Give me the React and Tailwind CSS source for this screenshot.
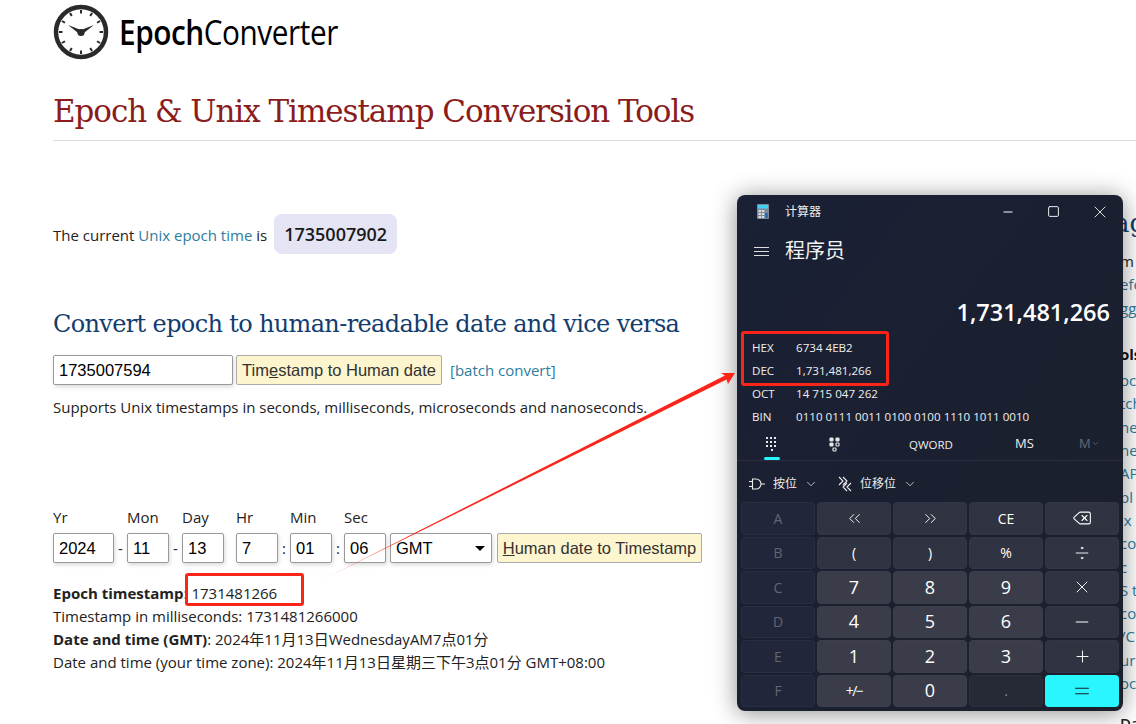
import { ChevronDown, ChevronsLeft, ChevronsRight, Delete, Divide, Equal, Minus, Plus, Square, X } from "lucide-react";

const FIELD = "h-[30px] border border-[#999] rounded-[2px] bg-white pl-[5px] text-[16.5px] text-black flex items-center shadow-[1px_2px_4px_rgba(0,0,0,0.15)] font-['Liberation_Sans',sans-serif]";
const YELLOW = "h-[30px] border border-[#aaa] rounded-[2px] bg-[#fdf5ce] text-[16.5px] text-[#333] flex items-center justify-center font-['Liberation_Sans',sans-serif]";
const CJK = "font-['Open_Sans','Noto_Sans_CJK_SC',sans-serif]";

const dateFields = [
  { label: "Yr", value: "2024", w: "w-[61px]", sep: "-", sepW: "w-[13px]" },
  { label: "Mon", value: "11", w: "w-[42px]", sep: "-", sepW: "w-[13px]" },
  { label: "Day", value: "13", w: "w-[42px]", sep: "", sepW: "w-[12px]" },
  { label: "Hr", value: "7", w: "w-[42px]", sep: ":", sepW: "w-[12px]" },
  { label: "Min", value: "01", w: "w-[42px]", sep: ":", sepW: "w-[12px]" },
  { label: "Sec", value: "06", w: "w-[42px]", sep: "", sepW: "w-[12px]" },
];

const LINK = "text-[#2d7d9d]";
const sideLines = [
  { text: "m", cls: "text-[#222] mt-[12px]" },
  { text: "efe", cls: LINK },
  { text: "gg", cls: LINK },
  { text: "ols", cls: "text-[#111] font-bold mt-[23px]" },
  { text: "oc", cls: `${LINK} mt-[3px]` },
  { text: "tch", cls: LINK },
  { text: "ne", cls: LINK },
  { text: "ne", cls: LINK },
  { text: "AP", cls: LINK },
  { text: "bl", cls: LINK },
  { text: "ix", cls: LINK },
  { text: "co", cls: LINK },
  { text: "c", cls: LINK },
  { text: "S t", cls: LINK },
  { text: "co", cls: LINK },
  { text: "/C", cls: LINK },
  { text: "ur", cls: LINK },
  { text: "oc", cls: LINK },
];

const radixRows = [
  { label: "HEX", value: "6734 4EB2" },
  { label: "DEC", value: "1,731,481,266" },
  { label: "OCT", value: "14 715 047 262" },
  { label: "BIN", value: "0110 0111 0011 0100 0100 1110 1011 0010" },
];

const OFF = "bg-[#22263a] border border-[#2a2e42] text-[#62656f] text-[14px]";
const FN = "bg-[#303341] border border-[#33364a] text-white text-[14px]";
const NUM = "bg-[#3a3c4a] border border-[#3d3f4d] text-white text-[18px]";

const keys = [
  ["A", OFF], [<ChevronsLeft key="l" size={19} strokeWidth={1.2} />, FN], [<ChevronsRight key="r" size={19} strokeWidth={1.2} />, FN], ["CE", FN], [<Delete key="d" size={20} strokeWidth={1.3} />, FN],
  ["B", OFF], ["(", FN], [")", FN], ["%", FN], [<Divide key="v" size={20} strokeWidth={1.1} />, FN],
  ["C", OFF], ["7", NUM], ["8", NUM], ["9", NUM], [<X key="x" size={20} strokeWidth={1.1} />, FN],
  ["D", OFF], ["4", NUM], ["5", NUM], ["6", NUM], [<Minus key="m" size={20} strokeWidth={1.2} />, FN],
  ["E", OFF], ["1", NUM], ["2", NUM], ["3", NUM], [<Plus key="p" size={19} strokeWidth={1.2} />, FN],
  ["F", OFF], [<span key="s" className="text-[14px] tracking-[-1.5px]">+/−</span>, NUM], ["0", NUM], [".", "bg-[#262936] border border-[#2c2f3c] text-[#8a8c96] text-[14px]"], [<Equal key="e" size={22} strokeWidth={1.2} />, "bg-[#29f6ff] text-[#16202c]"],
];

function ClockLogo() {
  const ticks = Array.from({ length: 12 }, (_, i) => i * 30);
  return (
    <svg width="56" height="56" viewBox="0 0 56 56" className="shrink-0">
      <circle cx="28" cy="28" r="25" fill="none" stroke="#2a2a2a" strokeWidth="4.5" />
      {ticks.map((a) => (
        <line key={a} x1="28" y1="6" x2="28" y2="9.5" stroke="#2a2a2a" strokeWidth="2" transform={`rotate(${a} 28 28)`} />
      ))}
      <path d="M15 21 L28 26 L41 21 L29.5 30 L26.5 30 Z" fill="#2a2a2a" />
      <circle cx="28" cy="28.5" r="3.6" fill="#2a2a2a" />
    </svg>
  );
}

function CalcIcon() {
  return (
    <svg width="12" height="15" viewBox="0 0 12 15">
      <rect width="12" height="15" rx="1" fill="#7d8a96" />
      <rect x="1" y="1" width="10" height="3.5" fill="#3fd0f5" />
      <g fill="#d5dbe0">
        <rect x="1.5" y="6" width="2.5" height="2" /><rect x="4.8" y="6" width="2.5" height="2" />
        <rect x="1.5" y="9" width="2.5" height="2" /><rect x="4.8" y="9" width="2.5" height="2" />
        <rect x="1.5" y="12" width="2.5" height="2" /><rect x="4.8" y="12" width="2.5" height="2" />
      </g>
      <rect x="8.2" y="9" width="2.5" height="5" fill="#2367b0" />
    </svg>
  );
}

function Calculator() {
  return (
    <div className={`absolute left-[737px] top-[195px] w-[386px] h-[516px] rounded-[8px] bg-gradient-to-br from-[#1a2035] to-[#1c202c] shadow-[0_2px_24px_rgba(0,0,0,0.45)] text-white flex flex-col font-['Open_Sans','Noto_Sans_CJK_SC',sans-serif] overflow-hidden`}>
      <div className="h-[33px] shrink-0 flex items-center pl-[20px]">
        <CalcIcon />
        <span className="ml-[16px] text-[12px] text-[#eee]">计算器</span>
        <div className="ml-auto flex items-center pr-[13px]">
          <Minus size={14} strokeWidth={1.7} />
          <Square size={13} strokeWidth={1.7} className="ml-[32px]" />
          <X size={20} strokeWidth={1} className="ml-[30px]" />
        </div>
      </div>
      <div className="h-[46px] shrink-0 flex items-center pl-[17px]">
        <div className="w-[15px] flex flex-col gap-[3px]">
          <div className="h-px bg-[#ddd]" />
          <div className="h-px bg-[#ddd]" />
          <div className="h-px bg-[#ddd]" />
        </div>
        <span className="ml-[16px] text-[20px] text-[#f2f2f2]">程序员</span>
      </div>
      <div className="h-[62px] shrink-0 flex items-start pt-[23px] leading-[30px] justify-end pr-[13px] text-[23.5px] font-semibold">1,731,481,266</div>
      <div className="shrink-0 flex flex-col pl-[15px] relative text-[11.6px] text-[#eee]">
        <div className="absolute left-[6px] top-[29px] w-px h-[14px] bg-[#888]" />
        {radixRows.map((r) => (
          <div key={r.label} className="h-[23px] flex items-center">
            <span className="w-[44px]">{r.label}</span>
            <span>{r.value}</span>
          </div>
        ))}
      </div>
      <div className="h-[33px] shrink-0 flex items-center relative text-[11.5px] border-b border-[#2a2e40]">
        <div className="w-[70px] flex justify-center relative">
          <svg width="12" height="16" viewBox="0 0 12 16" fill="#e8e8e8">
            {[0, 4, 8].flatMap((x) => [1, 5, 9].map((y) => <rect key={`${x}-${y}`} x={x} y={y} width="2" height="2" />))}
            <rect x="5" y="13" width="2" height="2" />
          </svg>
          <div className="absolute left-[27px] top-[21px] w-[16px] h-[3px] rounded-full bg-[#29f6ff]" />
        </div>
        <div className="w-[56px] flex justify-center">
          <svg width="12" height="15" viewBox="0 0 12 15" fill="none" stroke="#e8e8e8" strokeWidth="1.2">
            <rect x="1" y="1" width="3" height="3" rx="0.8" fill="#e8e8e8" /><rect x="7" y="1" width="3" height="3" rx="0.8" fill="#e8e8e8" />
            <rect x="1" y="6" width="3" height="3" rx="0.8" fill="#e8e8e8" /><rect x="7" y="6" width="3" height="3" rx="0.8" />
            <rect x="4" y="11" width="3" height="3" rx="0.8" />
          </svg>
        </div>
        <span className="absolute left-[172px] top-[8px] text-[#eee]">QWORD</span>
        <span className="absolute left-[278px] top-[6px] text-[13px] text-[#eee]">MS</span>
        <span className="absolute left-[342px] top-[6px] text-[13px] text-[#666a78] flex items-center">M<ChevronDown size={9} /></span>
      </div>
      <div className="h-[41px] shrink-0 flex items-center pl-[12px] pt-[4px] text-[12px] text-[#eee]">
        <svg width="17" height="14" viewBox="0 0 17 14" fill="none" stroke="#eee" strokeWidth="1.1">
          <path d="M3.5 2 H7 A5 5 0 0 1 7 12 H3.5 Z M0 4.5 H3.5 M0 9.5 H3.5 M12 7 H16" />
        </svg>
        <span className="ml-[7px]">按位</span>
        <ChevronDown size={14} strokeWidth={1.3} className="ml-[7px]" />
        <svg width="14" height="16" viewBox="0 0 14 16" fill="none" stroke="#eee" strokeWidth="1.1" className="ml-[20px]">
          <path d="M1 1 L5 5 L1 9 M5 1 L9 5 L5 9 M13 7 L9 11 L13 15 M9 7 L5 11 L9 15" />
        </svg>
        <span className="ml-[8px]">位移位</span>
        <ChevronDown size={14} strokeWidth={1.3} className="ml-[7px]" />
      </div>
      <div className="flex-1 grid grid-cols-5 grid-rows-6 gap-[2px] px-[4px] pb-[4px]">
        {keys.map(([label, cls], i) => (
          <div key={i} className={`rounded-[4px] flex items-center justify-center ${cls}`}>{label}</div>
        ))}
      </div>
    </div>
  );
}

export default function App() {
  return (
    <div className={`relative w-[1136px] h-[724px] overflow-hidden bg-white text-[15px] text-[#222] ${CJK}`}>
      <div className="flex">
        <div className="w-[1120px] shrink-0 pl-[53px]">
          <div className="h-[62px] flex items-center pt-[2px]">
            <ClockLogo />
            <div className="ml-[10px] text-[34px] tracking-[-0.5px] text-black whitespace-nowrap origin-left scale-x-[0.875]">
              <span className="font-semibold">Epoch</span>
              <span>Converter</span>
            </div>
          </div>
          <h1 className="mt-[29px] text-[31px] leading-[40px] text-[#8b1c1c] font-['DejaVu_Serif',serif] tracking-[-1.05px] whitespace-nowrap">
            Epoch &amp; Unix Timestamp Conversion Tools
          </h1>
          <div className="mt-[9px] h-px w-[1083px] bg-[#ddd]" />
          <div className="mt-[73px] flex items-center h-[40px]">
            <span className="pt-[3px]">The current <span className={LINK}>Unix epoch time</span> is</span>
            <span className="ml-[7px] h-[40px] w-[123px] rounded-[8px] bg-[#e4e4f4] flex items-center justify-center text-[18px] font-semibold text-[#1a1a1a]">1735007902</span>
          </div>
          <h2 className="mt-[53px] text-[24px] leading-[34px] text-[#123d6e] font-['DejaVu_Serif',serif] tracking-[-0.65px] whitespace-nowrap">
            Convert epoch to human-readable date and vice versa
          </h2>
          <div className="mt-[14px] flex items-center">
            <div className={`${FIELD} w-[180px]`}>1735007594</div>
            <button className={`${YELLOW} w-[206px] ml-[3px]`}>Tim<u>e</u>stamp to Human date</button>
            <span className={`ml-[8px] ${LINK}`}>[batch convert]</span>
          </div>
          <p className="mt-[11px] leading-[22px] whitespace-nowrap">Supports Unix timestamps in seconds, milliseconds, microseconds and nanoseconds.</p>
          <div className="mt-[88px] flex items-end">
            {dateFields.map((f) => (
              <div key={f.label} className="flex items-end">
                <div className="flex flex-col">
                  <span className="h-[22px] leading-[22px]">{f.label}</span>
                  <div className={`${FIELD} ${f.w} mt-[5px]`}>{f.value}</div>
                </div>
                <span className={`h-[30px] flex items-center justify-center ${f.sepW}`}>{f.sep}</span>
              </div>
            ))}
            <div className={`${FIELD} w-[102px] -ml-[8px] relative`}>
              GMT
              <span className="absolute right-[6px] top-[12px] border-x-[5px] border-t-[5px] border-x-transparent border-t-black" />
            </div>
            <button className={`${YELLOW} w-[205px] ml-[5px]`}><u>H</u>uman date to Timestamp</button>
          </div>
          <div className="mt-[19px] leading-[23px] whitespace-nowrap">
            <div><b>Epoch timestamp</b>: 1731481266</div>
            <div>Timestamp in milliseconds: 1731481266000</div>
            <div><b>Date and time (GMT)</b>: 2024年11月13日WednesdayAM7点01分</div>
            <div>Date and time (your time zone): 2024年11月13日星期三下午3点01分 GMT+08:00</div>
          </div>
        </div>
        <div className="flex-1 pt-[208px] leading-[23.3px] whitespace-nowrap">
          <div className="-ml-[6px] text-[26px] leading-[30px] text-[#123d6e] font-['DejaVu_Serif',serif]">ag</div>
          {sideLines.map((l, i) => (
            <div key={i} className={l.cls}>{l.text}</div>
          ))}
          <div className="mt-[17px] text-[#222] font-semibold">Dat</div>
        </div>
      </div>

      <Calculator />

      {/* red annotations drawn on top of the screenshot */}
      <div className="absolute left-[185px] top-[573px] w-[119px] h-[33px] border-[3px] border-[#fb2419] rounded-[3px]" />
      <div className="absolute left-[741px] top-[331px] w-[148px] h-[55px] border-[3px] border-[#fb2419] rounded-[3px]" />
      <svg className="absolute left-0 top-0" width="1136" height="724">
        <defs>
          <linearGradient id="fade" x1="312" y1="585" x2="420" y2="530" gradientUnits="userSpaceOnUse">
            <stop offset="0" stopColor="#fb2419" stopOpacity="0" />
            <stop offset="1" stopColor="#fb2419" />
          </linearGradient>
        </defs>
        <path d="M312 585 L725 375.5 L721 373 L735 373 L728 384 L726.5 379.5 Z" fill="url(#fade)" />
      </svg>
    </div>
  );
}
